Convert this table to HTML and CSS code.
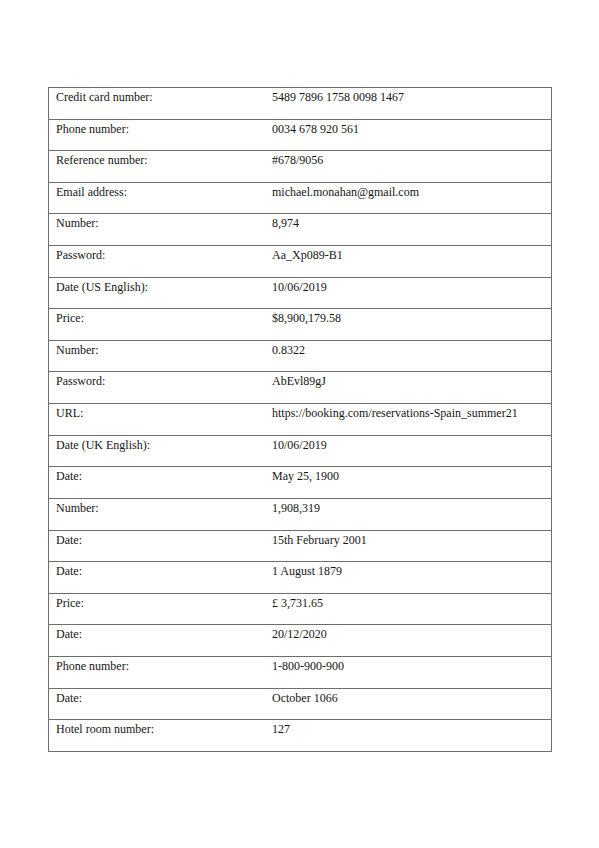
FILE: index.html
```html
<!DOCTYPE html>
<html lang="en">
<head>
<meta charset="utf-8">
<title>Data table</title>
<link rel="stylesheet" href="styles.css">
</head>
<body>
<div class="page">
  <div class="table">
    <div class="row"><div class="cell">Credit card number:</div><div class="cell">5489 7896 1758 0098 1467</div></div>
    <div class="row"><div class="cell">Phone number:</div><div class="cell">0034 678 920 561</div></div>
    <div class="row"><div class="cell">Reference number:</div><div class="cell">#678/9056</div></div>
    <div class="row"><div class="cell">Email address:</div><div class="cell">michael.monahan@gmail.com</div></div>
    <div class="row"><div class="cell">Number:</div><div class="cell">8,974</div></div>
    <div class="row"><div class="cell">Password:</div><div class="cell">Aa_Xp089-B1</div></div>
    <div class="row"><div class="cell">Date (US English):</div><div class="cell">10/06/2019</div></div>
    <div class="row"><div class="cell">Price:</div><div class="cell">$8,900,179.58</div></div>
    <div class="row"><div class="cell">Number:</div><div class="cell">0.8322</div></div>
    <div class="row"><div class="cell">Password:</div><div class="cell">AbEvl89gJ</div></div>
    <div class="row"><div class="cell">URL:</div><div class="cell">https://booking.com/reservations-Spain_summer21</div></div>
    <div class="row"><div class="cell">Date (UK English):</div><div class="cell">10/06/2019</div></div>
    <div class="row"><div class="cell">Date:</div><div class="cell">May 25, 1900</div></div>
    <div class="row"><div class="cell">Number:</div><div class="cell">1,908,319</div></div>
    <div class="row"><div class="cell">Date:</div><div class="cell">15th February 2001</div></div>
    <div class="row"><div class="cell">Date:</div><div class="cell">1 August 1879</div></div>
    <div class="row"><div class="cell">Price:</div><div class="cell">£ 3,731.65</div></div>
    <div class="row"><div class="cell">Date:</div><div class="cell">20/12/2020</div></div>
    <div class="row"><div class="cell">Phone number:</div><div class="cell">1-800-900-900</div></div>
    <div class="row"><div class="cell">Date:</div><div class="cell">October 1066</div></div>
    <div class="row"><div class="cell">Hotel room number:</div><div class="cell">127</div></div>
  </div>
</div>
</body>
</html>
```

FILE: styles.css
```css
html, body {
  margin: 0;
  padding: 0;
  background: #ffffff;
}

.page {
  padding: 87px 0 0 48px;
  font-family: "Liberation Serif", "Times New Roman", serif;
  font-size: 12px;
  line-height: 14px;
  color: #151515;
}

.table {
  width: 504px;
  box-sizing: border-box;
  border-top: 1px solid #6e6e6e;
  border-left: 1px solid #6e6e6e;
  border-right: 1px solid #6e6e6e;
}

.row {
  display: grid;
  grid-template-columns: 216px 1fr;
  height: 31.62px;
  box-sizing: border-box;
  border-bottom: 1px solid #6e6e6e;
}

.cell {
  padding: 2px 7px 0 7px;
  white-space: nowrap;
}
```
